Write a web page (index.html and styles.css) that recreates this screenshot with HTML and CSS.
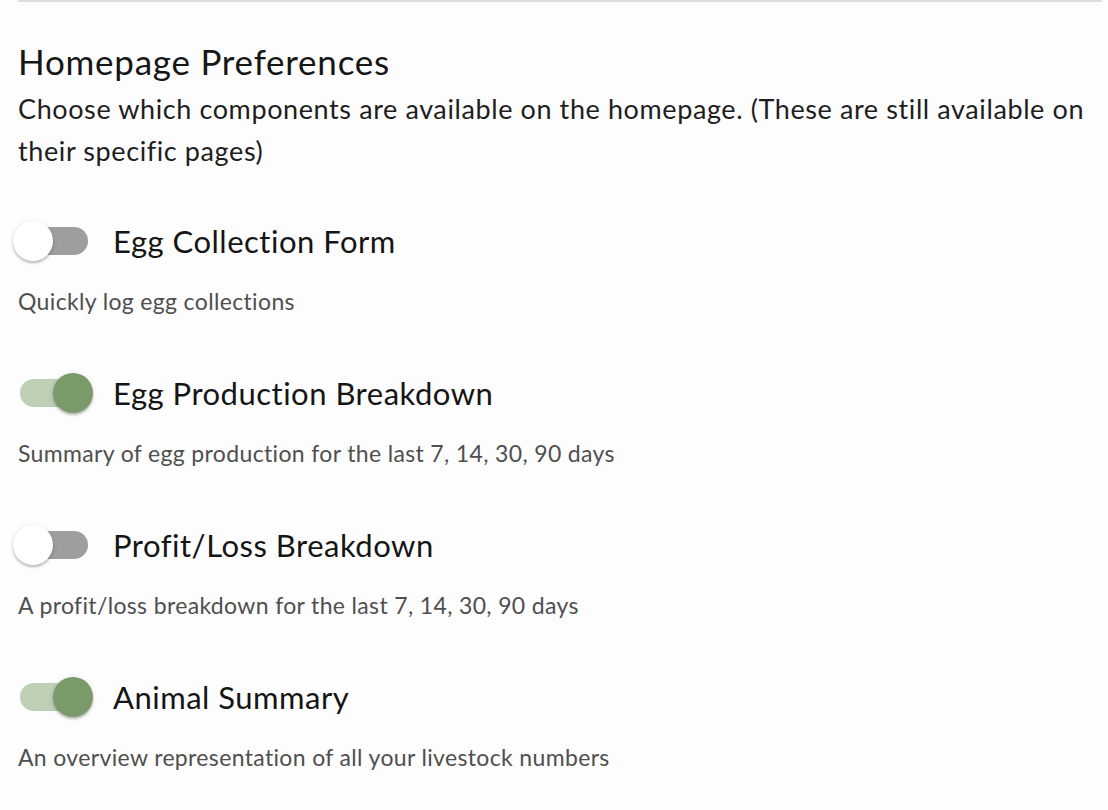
FILE: index.html
```
<!DOCTYPE html>
<html lang="en">
<head>
  <meta charset="UTF-8" />
  <meta name="viewport" content="width=device-width, initial-scale=1.0"/>
  <title>Homepage Preferences</title>
  <link rel="stylesheet" href="styles.css">
</head>
<body>
  <div class="settings">
    <h2>Homepage Preferences</h2>
    <p class="intro">Choose which components are available on the homepage. (These are still available on their specific pages)</p>

    <div class="pref">
      <div class="pref-row">
        <span class="switch"><span class="track"></span><span class="thumb"></span></span>
        <span class="pref-label">Egg Collection Form</span>
      </div>
      <div class="pref-desc">Quickly log egg collections</div>
    </div>

    <div class="pref">
      <div class="pref-row">
        <span class="switch on"><span class="track"></span><span class="thumb"></span></span>
        <span class="pref-label">Egg Production Breakdown</span>
      </div>
      <div class="pref-desc">Summary of egg production for the last 7, 14, 30, 90 days</div>
    </div>

    <div class="pref">
      <div class="pref-row">
        <span class="switch"><span class="track"></span><span class="thumb"></span></span>
        <span class="pref-label">Profit/Loss Breakdown</span>
      </div>
      <div class="pref-desc">A profit/loss breakdown for the last 7, 14, 30, 90 days</div>
    </div>

    <div class="pref">
      <div class="pref-row">
        <span class="switch on"><span class="track"></span><span class="thumb"></span></span>
        <span class="pref-label">Animal Summary</span>
      </div>
      <div class="pref-desc">An overview representation of all your livestock numbers</div>
    </div>
  </div>
</body>
</html>
```

FILE: styles.css
```
body {
  margin: 0;
  background: #fdfdfd;
  font-family: Lato, "Open Sans", sans-serif;
  font-variant-ligatures: none;
  color: #1b1b1b;
}
.settings {
  margin: 0 6px 0 18px;
  border-top: 2px solid #dddddd;
}
.settings h2 {
  font-size: 35px;
  font-weight: 400;
  line-height: 1.2;
  letter-spacing: 0.75px;
  margin: 38px 0 6px;
  color: #161616;
}
.intro {
  font-size: 27px;
  line-height: 42px;
  letter-spacing: 0.6px;
  margin: 0 0 49px;
  color: #1e1e1e;
}
.pref {
  margin-bottom: 55px;
}
.pref-row {
  display: flex;
  align-items: center;
  margin-left: -5px;
}
.switch {
  position: relative;
  flex: none;
  width: 82px;
  height: 40px;
}
.switch .track {
  position: absolute;
  left: 7px;
  top: 6px;
  width: 68px;
  height: 28px;
  border-radius: 14px;
  background: #9e9e9e;
}
.switch .thumb {
  position: absolute;
  left: 0;
  top: 0;
  width: 40px;
  height: 40px;
  border-radius: 50%;
  background: #ffffff;
  box-shadow: 0 2px 2px rgba(0,0,0,0.2), 0 1px 5px rgba(0,0,0,0.12);
}
.switch.on .track {
  background: #bdd0b5;
}
.switch.on .thumb {
  left: 40px;
  background: #7a9b69;
}
.pref-label {
  margin-left: 18px;
  font-size: 31px;
  letter-spacing: 0.5px;
  color: #151515;
}
.pref-desc {
  margin-top: 24px;
  font-size: 23px;
  line-height: 33px;
  letter-spacing: 0.35px;
  color: #4f4f4f;
}
```
